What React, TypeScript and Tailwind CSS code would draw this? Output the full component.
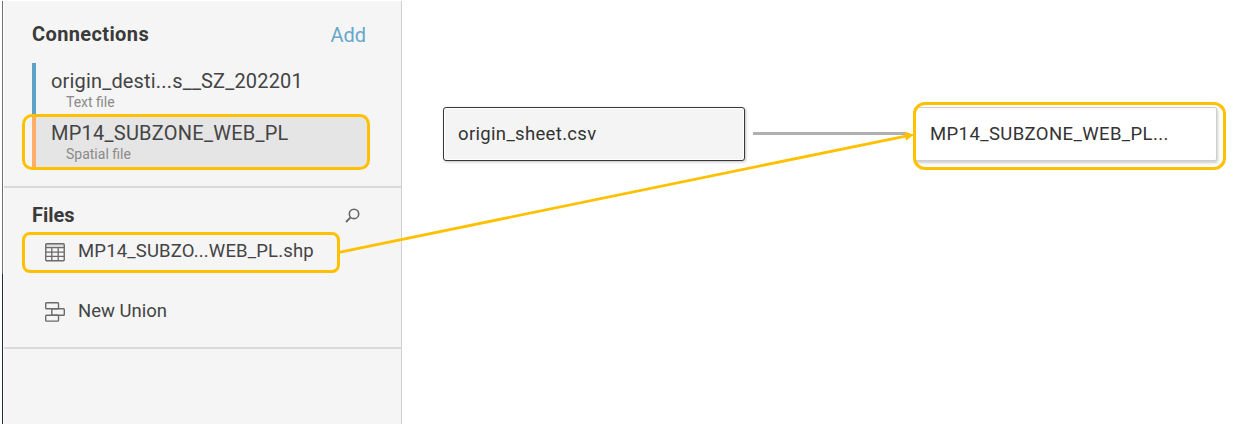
import type { ReactNode } from "react";

function TableIcon() {
  return (
    <svg width="20" height="19" viewBox="0 0 20 19" fill="none" stroke="#6b6b6b" className="shrink-0">
      <path d="M1 1h18v3.5H1z" fill="#dcdcdc" stroke="none" />
      <rect x="0.75" y="0.75" width="18.5" height="17" rx="1" strokeWidth="1.4" />
      <path d="M1 4.7h18M1 9.1h18M1 13.3h18M6.8 4.7v13M13.2 4.7v13" strokeWidth="1.3" />
    </svg>
  );
}

function UnionIcon() {
  return (
    <svg width="20" height="20" viewBox="0 0 20 20" fill="none" stroke="#6b6b6b" strokeWidth="1.4" className="shrink-0">
      <rect x="0.7" y="0.8" width="12.8" height="5.9" rx="0.8" />
      <rect x="6.8" y="6.7" width="12.5" height="6.5" rx="0.8" />
      <rect x="0.7" y="13.2" width="12.8" height="5.9" rx="0.8" />
    </svg>
  );
}

function SearchIcon() {
  return (
    <svg width="15" height="15" viewBox="0 0 15 15" fill="none" stroke="#666" strokeWidth="1.6">
      <circle cx="9" cy="5.9" r="4.7" />
      <path d="M5.6 9.3 1 14" strokeWidth="1.8" />
    </svg>
  );
}

function Connection({ bar, row, kind, children }: { bar: string; row: string; kind: string; children: ReactNode }) {
  return (
    <div className="flex h-[52px]">
      <div className={`w-1 ${bar}`} />
      <div className={`flex-1 pl-[15px] pt-1.5 ${row}`}>
        {children}
        <div className="pl-[15px] text-[14px] leading-[18px] text-[#8a8a8a]">{kind}</div>
      </div>
    </div>
  );
}

function Sidebar() {
  return (
    <aside className="mt-px flex h-[423px] w-[398px] flex-col border-r-[1.5px] border-[#cfcfcf] bg-[#f5f5f5]">
      <section className="h-[187px] border-b-2 border-[#dadada] pl-7 pr-[35px] pt-[20px]">
        <div className="flex h-7 items-start justify-between">
          <h2 className="text-[20px] font-bold leading-[26px] tracking-[0.38px] text-[#3a3a3a]">Connections</h2>
          <button className="pt-px text-[20px] leading-[27px] text-[#65a8ca]">Add</button>
        </div>
        <div className="-mr-px mt-3.5">
          <Connection bar="bg-[#5fa2c5]" row="" kind="Text file">
            <div className="text-[20px] leading-6 tracking-[0.17px]">origin_desti...s__SZ_202201</div>
          </Connection>
          <Connection bar="bg-[#ffae69]" row="bg-[#e5e5e5]" kind="Spatial file">
            <div className="text-[20px] leading-6 tracking-[0.24px]">MP14_SUBZONE_WEB_PL</div>
          </Connection>
        </div>
      </section>
      <section className="h-[161px] border-b-2 border-[#dadada] pl-7 pr-[41px] pt-[14px]">
        <div className="flex items-center justify-between">
          <h2 className="text-[20px] font-bold leading-[26px] text-[#3a3a3a]">Files</h2>
          <SearchIcon />
        </div>
        <div className="mt-3 flex h-6 items-center gap-[13px] pl-[13px] text-[18.5px] tracking-[0.16px]">
          <TableIcon />
          <span>MP14_SUBZO...WEB_PL.shp</span>
        </div>
        <div className="mt-9 flex h-6 items-center gap-[13px] pl-[13px] text-[18.5px]">
          <UnionIcon />
          <span>New Union</span>
        </div>
      </section>
    </aside>
  );
}

export default function App() {
  return (
    <div className="relative flex h-[424px] w-[1234px] overflow-hidden bg-white text-[#444] [font-family:Roboto,'Liberation_Sans',sans-serif]">
      <div className="ml-[2px] mr-px mt-px flex w-px flex-col">
        <div className="h-[273px] bg-[#6e6e6e]" />
        <div className="flex-1 bg-[#1c2c3c]" />
      </div>
      <Sidebar />
      <main className="relative flex-1">
        <div className="absolute left-[41px] top-[107px] flex h-[54px] w-[302px] items-center rounded-[3px] border-[1.5px] border-[#383838] bg-[#f4f4f4] pl-[14px] pt-0.5 text-[18.5px] tracking-[0.33px] text-[#333] shadow-[inset_0_0_0_1px_#fff,1px_1px_3px_rgba(0,0,0,0.25)]">
          origin_sheet.csv
        </div>
        <div className="absolute left-[351px] top-[132px] h-[3px] w-[154px] bg-[#b0b0b0]" />
        <div className="absolute left-[512px] top-[107px] flex h-[54px] w-[303px] items-center rounded-[2px] border-[1.5px] border-[#cfcfcf] bg-white pl-[15px] pt-0.5 text-[18.5px] tracking-[0.39px] text-[#333] shadow-[1px_2px_3px_rgba(0,0,0,0.2)]">
          MP14_SUBZONE_WEB_PL...
        </div>
      </main>
      <div className="absolute left-[22px] top-[114px] h-14 w-[348px] rounded-[10px] border-[3px] border-[#ffc000]" />
      <div className="absolute left-[22px] top-[232px] h-[41px] w-[318px] rounded-[8px] border-[3px] border-[#ffc000]" />
      <div className="absolute left-[913px] top-[102px] h-[68px] w-[313px] rounded-[12px] border-[3px] border-[#ffc000]" />
      <svg className="absolute left-0 top-0" width="1234" height="424">
        <path d="M339 252.3 907 135.8" stroke="#ffc000" strokeWidth="2.8" />
        <path d="M914 134.4 904.4 131.8 906.1 140.8z" fill="#ffc000" />
      </svg>
    </div>
  );
}
